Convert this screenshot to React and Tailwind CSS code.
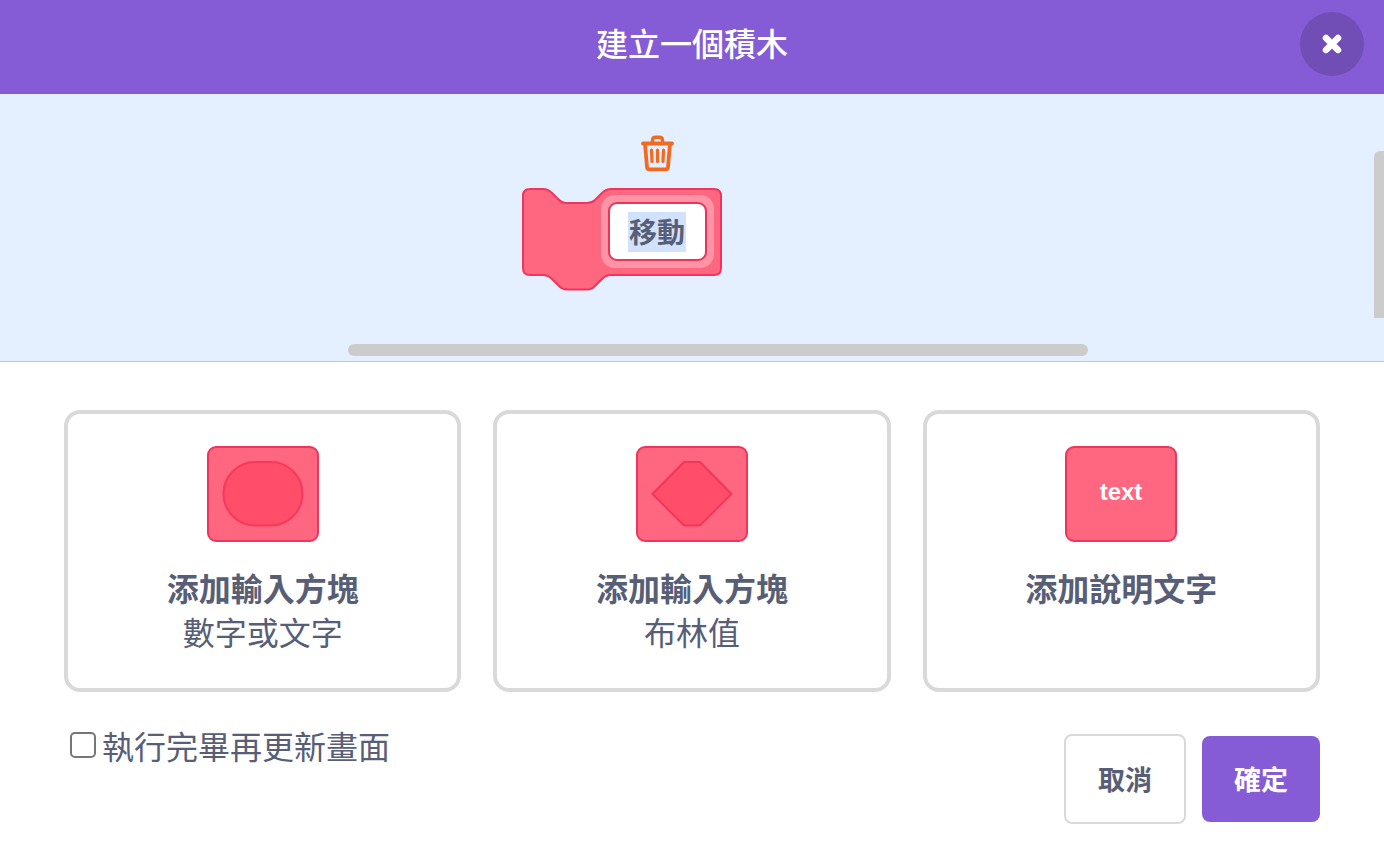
import React, { useState } from 'react';

const BlockTile = ({ children }) => (
  <svg width="112" height="96" viewBox="0 0 112 96" aria-hidden="true">
    <rect x="1" y="1" width="110" height="94" rx="8" fill="#FF6680" stroke="#F0355C" strokeWidth="2" />
    {children}
  </svg>
);

const InputShape = () => (
  <BlockTile>
    <rect x="16.500" y="16" width="79" height="63.500" rx="31.700" fill="#FF4D6A" stroke="#F5395A" strokeWidth="2" />
  </BlockTile>
);

const BooleanShape = () => (
  <BlockTile>
    <path
      d="M16.500 48 L47.500 16.500 Q48 16 49 16 H63 Q64 16 64.500 16.500 L95.500 48 L64.500 79 Q64 79.500 63 79.500 H49 Q48 79.500 47.500 79 Z"
      fill="#FF4D6A"
      stroke="#F0375A"
      strokeWidth="2"
      strokeLinejoin="round"
    />
  </BlockTile>
);

const TextShape = () => (
  <BlockTile>
    <text x="56" y="54" textAnchor="middle" fill="#fff" className="font-['Liberation_Sans',sans-serif] text-[24px] font-bold">
      text
    </text>
  </BlockTile>
);

const options = [
  { id: 'input', title: '添加輸入方塊', subtitle: '數字或文字', icon: InputShape },
  { id: 'boolean', title: '添加輸入方塊', subtitle: '布林值', icon: BooleanShape },
  { id: 'label', title: '添加說明文字', icon: TextShape },
];

const Header = () => (
  <header className="grid grid-cols-[64px_1fr_64px] items-start bg-[#855cd6] px-5 pt-3 pb-[18px]">
    <h1 className="col-start-2 text-center text-[32px] leading-[60px] font-medium text-white">建立一個積木</h1>
    <button type="button" aria-label="關閉" className="flex size-16 items-center justify-center rounded-full bg-[#714eb6]">
      <svg width="20" height="20" viewBox="0 0 20 20" fill="none" stroke="#fff" strokeWidth="6.500" strokeLinecap="round" aria-hidden="true">
        <path d="M4 4 L16 16 M16 4 L4 16" />
      </svg>
    </button>
  </header>
);

const Workspace = () => {
  const [name, setName] = useState('移動');

  return (
    <section className="relative h-[268px] overflow-hidden border-b border-[#c4c8cc] bg-[#e4f0ff]">
      {/* block being edited, centred slightly left of the canvas middle */}
      <div className="absolute top-[92px] left-1/2 -ml-[172px] h-[108px] w-[204px]">
        <svg width="204" height="108" viewBox="0 0 204 108" aria-hidden="true">
          <path
            d="M3 10 Q3 3 10 3 H23 C27 3 29.500 4.500 32 7 L38 13 C41 16 43 17 46 17 H67 C71 17 73 16 75 14 L82 7 C84.500 4.500 87 3 91 3 H194 Q201 3 201 10 V82 Q201 89 194 89 H91 C87 89 84.500 90.500 82 93 L75 100 C73 102.500 71 103.500 67 103.500 H47 C44 103.500 41.500 102.500 39 100 L32 93 C29.500 90.500 27 89 23 89 H10 Q3 89 3 82 Z"
            fill="#FF6680"
            stroke="#F0355C"
            strokeWidth="2"
          />
          <rect x="81" y="9" width="113" height="73" rx="14" fill="#fff" fillOpacity="0.3" />
          <rect x="89" y="17" width="97" height="57" rx="8" fill="#fff" stroke="#EE3358" strokeWidth="2" />
        </svg>
        <input
          type="text"
          aria-label="積木名稱"
          value={name}
          onChange={(e) => setName(e.target.value)}
          className="absolute top-[26px] left-[108px] h-10 w-[58px] bg-[#d0e2fd] pb-0.5 text-center text-[28px] font-bold text-[#575e75] outline-none"
        />
      </div>
      <button type="button" aria-label="刪除" className="absolute top-[41px] left-1/2 -ml-[51px]">
        <svg width="33" height="38" viewBox="0 0 33 38" fill="none" stroke="#F26A21" strokeLinecap="round" strokeLinejoin="round" aria-hidden="true">
          <path d="M2 8.500 H31" strokeWidth="3.800" />
          <path d="M11.500 8 V5.500 Q11.500 2.200 14.500 2.200 H18.500 Q21.500 2.200 21.500 5.500 V8" strokeWidth="3.400" />
          <path d="M4 9 L6 32 Q6.200 34.300 8.200 34.300 H24.800 Q26.800 34.300 27 32 L29 9" strokeWidth="3.800" />
          <path d="M10.500 15 L11 26.500 M16.500 15 V26.500 M22.500 15 L22 26.500" strokeWidth="3.200" />
        </svg>
      </button>
      <div className="absolute bottom-[5px] left-1/2 -ml-[344px] h-3 w-[740px] rounded-full bg-[#ccc]" />
      <div className="absolute top-[57px] right-0 h-[167px] w-[10px] rounded-tl-md bg-[#ccc]" />
    </section>
  );
};

const OptionCard = ({ option }) => (
  <button
    type="button"
    className="flex flex-col items-center rounded-2xl border-4 border-[#d9d9d9] px-4 pt-8 pb-[35px] text-[32px] leading-[44px]"
  >
    <option.icon />
    <span className="mt-[23px] font-bold">{option.title}</span>
    {option.subtitle && <span>{option.subtitle}</span>}
  </button>
);

const App = () => {
  const [warp, setWarp] = useState(false);

  return (
    <main className="min-h-screen bg-white font-['Noto_Sans_CJK_TC',sans-serif] text-[#575e75]">
      <Header />
      <Workspace />
      <div className="px-16 pt-12 pb-10">
        <div className="grid grid-cols-3 gap-8">
          {options.map((option) => (
            <OptionCard key={option.id} option={option} />
          ))}
        </div>

        <div className="flex items-start justify-between pt-[31px]">
          <label className="flex items-center gap-1.5 pl-1.5 text-[32px] leading-[44px]">
            <input
              type="checkbox"
              checked={warp}
              onChange={(e) => setWarp(e.target.checked)}
              className="size-[26px] appearance-none rounded-[5px] border-2 border-[#767676] bg-white checked:bg-[#855cd6]"
            />
            執行完畢再更新畫面
          </label>
          <div className="flex items-center gap-4 pt-[11px] text-[27px] leading-[38px] font-bold">
            <button type="button" className="rounded-lg border-2 border-[#d9d9d9] px-8 py-6">
              取消
            </button>
            <button type="button" className="rounded-lg bg-[#855cd6] px-8 py-6 text-white">
              確定
            </button>
          </div>
        </div>
      </div>
    </main>
  );
};

export default App;
